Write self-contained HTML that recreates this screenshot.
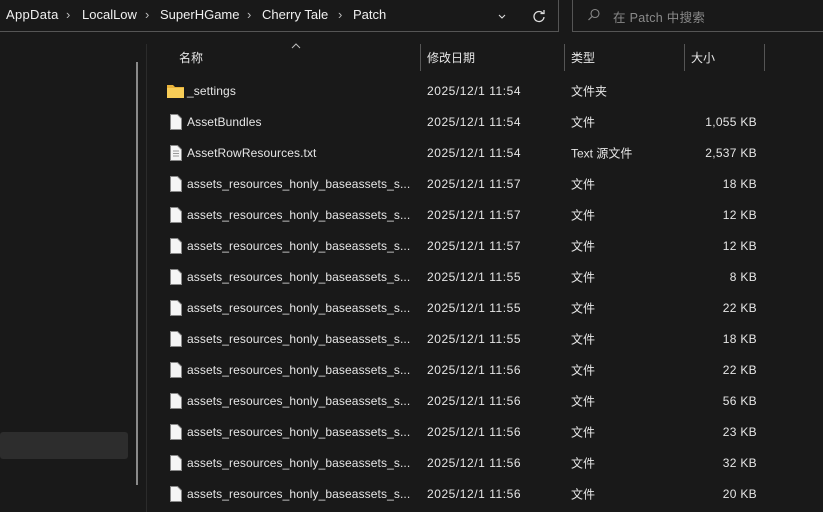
<!DOCTYPE html>
<html><head><meta charset="utf-8"><style>
*{margin:0;padding:0;box-sizing:border-box}
body{width:823px;height:512px;background:#191919;color:#e6e6e6;font-family:"Liberation Sans","Noto Sans CJK SC",sans-serif;font-size:12px;position:relative;overflow:hidden}
.abs{position:absolute}
.hl{position:absolute;background:#3f3f3f}
.row{position:absolute;left:0;width:823px;height:31px}
.row span{position:absolute;top:50%;transform:translateY(-50%);white-space:nowrap}
.n{left:187px;letter-spacing:0.1px}.d{left:427px;letter-spacing:0.55px}.t{left:571px}.s{right:66px;letter-spacing:0.3px}
.ic{position:absolute;left:169px;top:50%;transform:translateY(-50%)}
.bc{position:absolute;top:7px;font-size:13px;color:#f0f0f0;white-space:nowrap}
.ch{position:absolute;top:7px;font-size:13px;color:#bbb}
</style></head><body>
<div class="abs" style="left:0;top:0;width:559px;height:32px;border-right:1px solid #555;border-bottom:1px solid #555"></div>
<div class="abs" style="left:572px;top:0;width:260px;height:32px;border-left:1px solid #555;border-bottom:1px solid #555"></div>
<span class="bc" style="left:6px;letter-spacing:0.3px">AppData</span><span class="ch" style="left:66px">›</span>
<span class="bc" style="left:82px">LocalLow</span><span class="ch" style="left:145px">›</span>
<span class="bc" style="left:160px">SuperHGame</span><span class="ch" style="left:247px">›</span>
<span class="bc" style="left:262px">Cherry Tale</span><span class="ch" style="left:338px">›</span>
<span class="bc" style="left:353px">Patch</span>
<svg class="abs" style="left:497px;top:11px" width="10" height="10"><path d="M2 4l3 3 3-3" stroke="#ddd" fill="none" stroke-width="1.1"/></svg>
<svg class="abs" style="left:532px;top:9px" width="14" height="14"><path d="M11 4.5A5 5 0 1 0 12 8" stroke="#ddd" fill="none" stroke-width="1.3"/><path d="M8.5 4.5h3.5V1" stroke="#ddd" fill="none" stroke-width="1.3"/></svg>
<svg class="abs" style="left:587px;top:8px" width="14" height="14"><circle cx="8" cy="5.5" r="4" stroke="#888" fill="none" stroke-width="1.1"/><path d="M5 8.5L1.5 12" stroke="#888" stroke-width="1.2"/></svg>
<div class="abs" style="left:613px;top:7px;color:#8a8a8a;font-size:12.5px;letter-spacing:0.3px">在 Patch 中搜索</div>
<div class="abs" style="left:136px;top:62px;width:2px;height:423px;background:#8a8a8a"></div>
<div class="abs" style="left:0;top:432px;width:128px;height:27px;background:#2d2d2d;border-radius:3px"></div>
<div class="abs" style="left:146px;top:44px;width:1px;height:468px;background:#2b2b2b"></div>
<svg class="abs" style="left:290px;top:42px" width="12" height="8"><path d="M2 6l4-4 4 4" stroke="#bbb" fill="none"/></svg>
<div class="abs" style="left:179px;top:49px">名称</div>
<div class="abs" style="left:427px;top:49px">修改日期</div>
<div class="abs" style="left:571px;top:49px">类型</div>
<div class="abs" style="left:691px;top:49px">大小</div>
<div class="hl" style="left:420px;top:44px;width:1px;height:27px;background:#555"></div>
<div class="hl" style="left:564px;top:44px;width:1px;height:27px;background:#555"></div>
<div class="hl" style="left:684px;top:44px;width:1px;height:27px;background:#555"></div>
<div class="hl" style="left:764px;top:44px;width:1px;height:27px;background:#555"></div>
<div id="rows"></div>
<div class="row" style="top:75px"><svg class="ic" style="left:167px" width="17" height="14"><path d="M0 1h6l2 2h9v11H0z" fill="#e8b23a"/><path d="M0 4h17v10H0z" fill="#f8cd57"/></svg><span class="n">_settings</span><span class="d">2025/12/1 11:54</span><span class="t">文件夹</span></div>
<div class="row" style="top:106px"><svg class="ic" style="left:170px" width="12" height="16"><path d="M.5.5h7l4 4v11H.5z" fill="#f5f5f5" stroke="#888"/></svg><span class="n">AssetBundles</span><span class="d">2025/12/1 11:54</span><span class="t">文件</span><span class="s">1,055 KB</span></div>
<div class="row" style="top:137px"><svg class="ic" style="left:170px" width="12" height="16"><path d="M.5.5h7l4 4v11H.5z" fill="#f5f5f5" stroke="#888"/><path d="M3 6h6M3 8.5h6M3 11h6" stroke="#999"/></svg><span class="n">AssetRowResources.txt</span><span class="d">2025/12/1 11:54</span><span class="t">Text 源文件</span><span class="s">2,537 KB</span></div>
<script>
var d=[["11:57","18"],["11:57","12"],["11:57","12"],["11:55","8"],["11:55","22"],["11:55","18"],["11:56","22"],["11:56","56"],["11:56","23"],["11:56","32"],["11:56","20"]];
var h="";d.forEach(function(r,i){h+='<div class="row" style="top:'+(168+31*i)+'px"><svg class="ic" style="left:170px" width="12" height="16"><path d="M.5.5h7l4 4v11H.5z" fill="#f5f5f5" stroke="#888"/></svg><span class="n">assets_resources_honly_baseassets_s...</span><span class="d">2025/12/1 '+r[0]+'</span><span class="t">文件</span><span class="s">'+r[1]+' KB</span></div>'});
document.getElementById("rows").innerHTML=h;
</script>
</body></html>
